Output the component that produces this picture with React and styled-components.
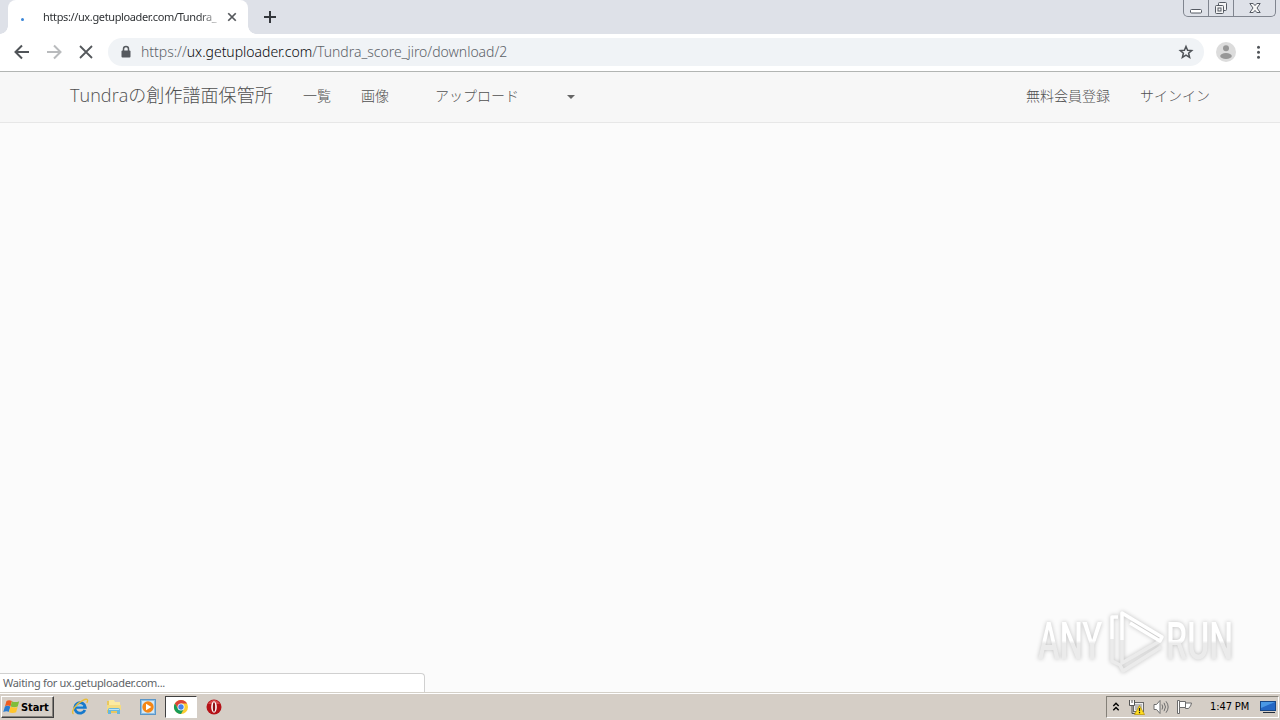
import React from "react";
import styled, { createGlobalStyle } from "styled-components";

const Global = createGlobalStyle`
  * { box-sizing: border-box; }
  html, body { margin: 0; padding: 0; overflow: hidden; }
  svg { display: block; flex: none; }
`;

const Screen = styled.div`
  position: relative;
  display: flex;
  flex-direction: column;
  width: 1280px;
  height: 720px;
  overflow: hidden;
  background: #fbfbfb;
  font-family: "Noto Sans", "Noto Sans CJK JP", sans-serif;
  white-space: nowrap;
`;

const TabStrip = styled.div`
  display: flex;
  align-items: flex-start;
  height: 34px;
  padding-left: 8px;
  background: #dee1e8;
`;

const Tab = styled.div`
  position: relative;
  display: flex;
  align-items: center;
  width: 240px;
  height: 34px;
  padding-left: 13px;
  border-radius: 8px 8px 0 0;
  background: #fff;
  &::before, &::after {
    content: "";
    position: absolute;
    bottom: 0;
    width: 8px;
    height: 8px;
  }
  &::before { left: -8px; background: radial-gradient(circle at 0 0, transparent 7.5px, #fff 8px); }
  &::after { right: -8px; background: radial-gradient(circle at 100% 0, transparent 7.5px, #fff 8px); }
`;

const LoadingDot = styled.span`
  width: 3px;
  height: 3px;
  margin-top: 5px;
  border-radius: 50%;
  background: #3a86d8;
`;

const TabTitle = styled.div`
  width: 176px;
  margin-left: 19px;
  font-size: 11px;
  line-height: 16px;
  letter-spacing: -0.37px;
  color: #303336;
  -webkit-mask-image: linear-gradient(90deg, #000 155px, rgba(0, 0, 0, 0.25) 176px);
  mask-image: linear-gradient(90deg, #000 155px, rgba(0, 0, 0, 0.25) 176px);
`;

const TabClose = styled.div`
  margin-left: 8px;
`;

const NewTab = styled.div`
  padding: 11px 0 0 16px;
`;

const WindowButtons = styled.div`
  display: flex;
  width: 93px;
  height: 17px;
  margin: 0 4px 0 auto;
  border: 1px solid #80858f;
  border-top: 0;
  border-radius: 0 0 5px 5px;
`;

const WindowButton = styled.div`
  display: flex;
  align-items: center;
  justify-content: center;
  width: ${(p) => p.$width}px;
  border-left: ${(p) => (p.$first ? "0" : "1px solid #80858f")};
`;

const Toolbar = styled.div`
  display: flex;
  align-items: center;
  height: 38px;
  padding: 0 14px 2px;
  border-bottom: 1px solid #b2b5b3;
  background: #fff;
`;

const NavIcons = styled.div`
  display: flex;
  align-items: center;
  gap: 16px;
  width: 94px;
`;

const AddressBar = styled.div`
  display: flex;
  align-items: center;
  width: 1096px;
  height: 28px;
  padding: 0 10px 0 12px;
  border-radius: 14px;
  background: #f0f3f6;
`;

const Url = styled.div`
  flex: 1;
  margin-left: 9px;
  font-size: 14px;
  font-weight: 300;
  line-height: 20px;
  letter-spacing: -0.02px;
  color: #5c6268;
`;

const Host = styled.span`
  color: #08090b;
`;

const ToolbarEnd = styled.div`
  display: flex;
  align-items: center;
  gap: 14px;
  margin-left: 12px;
`;

const SiteNav = styled.nav`
  display: flex;
  align-items: center;
  height: 51px;
  padding: 0 70px 3px;
  border-bottom: 1px solid #e7e7e7;
  background: #f7f7f7;
  font-family: "Open Sans", "Noto Sans CJK JP", sans-serif;
  font-weight: 300;
  color: #505050;
`;

const Brand = styled.div`
  width: 233px;
  padding-bottom: 2px;
  font-size: 18px;
  line-height: 26px;
  letter-spacing: 0.06px;
`;

const NavLink = styled.div`
  width: ${(p) => (p.$width ? `${p.$width}px` : "auto")};
  font-size: 14px;
  line-height: 20px;
`;

const Caret = styled.span`
  margin-top: 3px;
  border: 4px solid transparent;
  border-top-color: #666;
  border-bottom: 0;
`;

const NavRight = styled.div`
  display: flex;
  margin-left: auto;
`;

const Page = styled.main`
  flex: 1;
`;

const StatusBubble = styled.div`
  position: absolute;
  left: 0;
  bottom: 28px;
  width: 425px;
  height: 19px;
  padding-left: 3px;
  border: 1px solid #d0d0d0;
  border-left: 0;
  border-bottom: 0;
  border-radius: 0 4px 0 0;
  background: #fff;
  font-size: 11px;
  line-height: 18px;
  letter-spacing: -0.29px;
  color: #606367;
`;

const Watermark = styled.div`
  position: absolute;
  left: 1038px;
  top: 608px;
  display: flex;
  align-items: center;
  filter: drop-shadow(0 0 2px rgba(0, 0, 0, 0.24));
`;

const MarkText = styled.div`
  width: ${(p) => p.$width}px;
  height: 66px;
`;

const MarkLetters = styled.span`
  display: inline-block;
  font-family: "Roboto", sans-serif;
  font-size: 51px;
  font-weight: 500;
  line-height: 68px;
  background: linear-gradient(#fff 48%, #ebebeb 52%);
  -webkit-background-clip: text;
  background-clip: text;
  color: transparent;
  transform: scaleX(${(p) => p.$scale});
  transform-origin: 0 50%;
`;

const Taskbar = styled.div`
  display: flex;
  align-items: center;
  height: 28px;
  padding: 1px 1px 0 1px;
  border-top: 1px solid #d4d0c8;
  box-shadow: inset 0 1px #fff;
  background: #d5cec6;
  font-family: "DejaVu Sans Condensed", sans-serif;
`;

const StartButton = styled.div`
  display: flex;
  align-items: center;
  gap: 1px;
  width: 53px;
  height: 22px;
  padding-left: 1px;
  border: 1px solid;
  border-color: #fff #404040 #404040 #fff;
  box-shadow: inset -1px -1px #86827c;
  font-size: 11px;
  font-weight: 700;
  letter-spacing: -0.1px;
  color: #000;
`;

const QuickLaunch = styled.div`
  display: flex;
  align-items: center;
  margin-left: 9px;
`;

const TaskItem = styled.div`
  display: flex;
  align-items: center;
  justify-content: center;
  width: ${(p) => (p.$active ? 32 : 34)}px;
  height: 22px;
  border: 1px solid;
  border-color: ${(p) => (p.$active ? "#404040 #fff #fff #404040" : "transparent")};
  background: ${(p) => (p.$active ? "#fff" : "none")};
`;

const Tray = styled.div`
  display: flex;
  align-items: center;
  width: 173px;
  height: 22px;
  margin-left: auto;
  padding-left: 5px;
  border: 1px solid;
  border-color: #848078 #fff #fff #848078;
`;

const TrayIcons = styled.div`
  display: flex;
  align-items: center;
  gap: 8px;
  width: 98px;
`;

const Clock = styled.div`
  width: 50px;
  font-size: 11px;
  line-height: 16px;
  letter-spacing: -0.1px;
  color: #000;
`;

const BackIcon = ({ color, flip }) => (
  <svg width="16" height="16" viewBox="0 0 16 16" fill="none" stroke={color} strokeWidth="2">
    <path d={flip ? "M1 8h13M8 1.5 14.5 8 8 14.5" : "M15 8H2M8 1.5 1.5 8 8 14.5"} />
  </svg>
);

const CrossIcon = ({ size, color, width }) => (
  <svg width={size} height={size} viewBox="0 0 16 16" fill="none" stroke={color} strokeWidth={width}>
    <path d="M2 2l12 12M14 2 2 14" />
  </svg>
);

const LockIcon = () => (
  <svg width="12" height="14" viewBox="0 0 12 14">
    <path d="M3.5 6V4a2.5 2.5 0 0 1 5 0v2" fill="none" stroke="#55595e" strokeWidth="1.5" />
    <rect x="1.5" y="5.5" width="9" height="7" rx="1" fill="#55595e" />
  </svg>
);

const StarIcon = () => (
  <svg width="16" height="16" viewBox="0 0 16 16" fill="none" stroke="#4f5358" strokeWidth="1.5">
    <path d="M8 2.5 9.6 6.3l4.1.3-3.1 2.7 1 4L8 11.1l-3.6 2.2 1-4-3.1-2.7 4.1-.3z" />
  </svg>
);

const AvatarIcon = () => (
  <svg width="20" height="20" viewBox="0 0 20 20">
    <circle cx="10" cy="10" r="10" fill="#dcdcdc" />
    <circle cx="10" cy="6.3" r="3" fill="#979797" />
    <ellipse cx="10" cy="14" rx="5.8" ry="3" fill="#979797" />
  </svg>
);

const MenuIcon = () => (
  <svg width="16" height="16" viewBox="0 0 16 16" fill="#505458">
    <circle cx="8.5" cy="3.2" r="1.5" />
    <circle cx="8.5" cy="8.2" r="1.5" />
    <circle cx="8.5" cy="13.2" r="1.5" />
  </svg>
);

const WindowsLogo = () => (
  <svg width="17" height="16" viewBox="0 0 17 16">
    <path d="M3.5 2Q6 .5 8.9 2L7.5 7.3Q4.8 5.8 2 7.3z" fill="#ee5c20" />
    <path d="M8.9 2.2Q12.5 4 16.2 2.2l-1.5 5.4Q11.2 8.9 7.6 7.4z" fill="#7fbd3a" />
    <path d="M1.9 7.5Q4.5 6.2 7.3 7.5l-1.4 5.3Q3.2 11.6.3 13.1z" fill="#287bd0" />
    <path d="M7.5 7.8Q11 9.3 14.6 7.9l-1.5 5.3Q9.6 14.8 6 13.2z" fill="#ffc52c" />
  </svg>
);

const IeIcon = () => (
  <svg width="18" height="18" viewBox="0 0 18 18" fill="none">
    <path d="M13.9 12A5.3 5.3 0 1 1 14.3 9.3H5" stroke="#1679cc" strokeWidth="2.8" />
    <path d="M5 8.2h7" stroke="#78c8f2" strokeWidth="1" />
    <path d="M2.5 16C-.7 14 5.2 5.7 11.8 2.3 16.5 0 17.5 1.7 15.8 4.8" stroke="#e9bd36" strokeWidth="1.4" />
  </svg>
);

const FolderIcon = () => (
  <svg width="18" height="18" viewBox="0 0 18 18">
    <path d="M2 3h5l1 2h7v10H2z" fill="#e8c75f" />
    <path d="M4 2h5l1 2h5v5H4z" fill="#fbeaa0" />
    <path d="M2 7h14v5H2z" fill="#f4dc82" />
    <path d="M3 16v-4q0-2 2-2h8q2 0 2 2v4h-3v-3H6v3z" fill="#66b7de" />
    <path d="M4 11.5h10" stroke="#bde5f6" />
  </svg>
);

const MediaIcon = () => (
  <svg width="18" height="18" viewBox="0 0 18 18">
    <rect x="1.5" y="1.5" width="15" height="15" fill="#8fc0e5" stroke="#5a96c8" />
    <rect x="3" y="3" width="12" height="12" fill="#d5e9f6" />
    <circle cx="9" cy="9" r="5.7" fill="#f48616" />
    <path d="M7 5.7v6.6L12.4 9z" fill="#fff" />
  </svg>
);

const ChromeIcon = () => (
  <svg width="16" height="16" viewBox="0 0 16 16">
    <circle cx="8" cy="8" r="7" fill="#fccd32" />
    <path d="M1.9 4.5A7 7 0 0 1 14.1 4.5H8L5 9.7z" fill="#dc4437" />
    <path d="M1.9 4.5A7 7 0 0 0 8 15l3-5.2H5z" fill="#179b58" />
    <circle cx="8" cy="8" r="3.5" fill="#fff" />
    <circle cx="8" cy="8" r="2.7" fill="#4682ea" />
  </svg>
);

const OperaIcon = () => (
  <svg width="16" height="16" viewBox="0 0 16 16">
    <circle cx="8" cy="8" r="7.5" fill="#b51218" />
    <path d="M2 5Q8-3 14 5z" fill="#d8474a" />
    <ellipse cx="8" cy="8" rx="2.8" ry="5.8" fill="#fff" />
    <ellipse cx="8" cy="8" rx="1.2" ry="4.8" fill="#8e1015" />
  </svg>
);

const ChevronsIcon = () => (
  <svg width="8" height="10" viewBox="0 0 8 10" fill="none" stroke="#000" strokeWidth="1.4">
    <path d="M1.3 4 4 1.3 6.7 4M1.3 8.2 4 5.5l2.7 2.7" />
  </svg>
);

const NetworkIcon = () => (
  <svg width="17" height="16" viewBox="0 0 17 16">
    <rect x="5.5" y="3.5" width="10" height="9" fill="#eee" stroke="#686868" />
    <rect x="7" y="5" width="7" height="6" fill="#b9b9b9" />
    <path d="M1.5 1.5h5v5h-5z" fill="#fff" />
    <path d="M1.5 1v5.5h5V1M4 6.5v8h4M4 1v3" fill="none" stroke="#555" />
    <path d="M11.5 6.5 16.5 15.5h-10z" fill="#ffdd20" stroke="#b99100" strokeWidth=".7" />
    <path d="M11.5 9v3.2M11.5 13v1.2" stroke="#222" strokeWidth="1.2" />
  </svg>
);

const SpeakerIcon = () => (
  <svg width="16" height="16" viewBox="0 0 16 16" stroke="#6e6e6e">
    <path d="M1 5.5h2.5L7 1.5v13l-3.5-4H1z" fill="#fff" />
    <path d="M9 5.5q1.5 2.5 0 5M11 3.8q3 4.2 0 8.4M13 2.3q4.3 5.7 0 11.4" fill="none" />
  </svg>
);

const FlagIcon = () => (
  <svg width="16" height="16" viewBox="0 0 16 16" stroke="#6b6b6b">
    <path d="M.5 1.5h2v13h-2z" fill="#fff" />
    <path d="M2.5 2.5h6v1.5h6q-.3 3-3 5.5h-3V8.5h-6z" fill="#fff" />
    <path d="M8.5 4v4.5" fill="none" />
  </svg>
);

const DesktopIcon = () => (
  <svg width="16" height="14" viewBox="0 0 16 14">
    <rect x="0.5" y="1.5" width="15" height="9" fill="#2467c4" stroke="#184786" />
    <path d="M1 2h14L1 8z" fill="#4a98e5" />
    <path d="M3 12.5h12" stroke="#222c3c" />
  </svg>
);

const PlayMark = () => (
  <svg width="58" height="66" viewBox="0 0 58 66" fill="none" strokeWidth="3.5" strokeLinejoin="round">
    <path d="M52 33 14 55V32" stroke="#ebebeb" />
    <path d="M4 31v22l8 4 3 6L53 39" stroke="#ebebeb" />
    <path d="M14 32V5l40 24-2 4L22 15" stroke="#fff" />
    <path d="M10 9H4v22" stroke="#fff" />
  </svg>
);

export default function App() {
  return (
    <>
      <Global />
      <Screen>
        <TabStrip>
          <Tab>
            <LoadingDot />
            <TabTitle>https://ux.getuploader.com/Tundra_</TabTitle>
            <TabClose><CrossIcon size={10} color="#55585c" width={2.8} /></TabClose>
          </Tab>
          <NewTab>
            <svg width="12" height="12" viewBox="0 0 12 12" stroke="#34373c" strokeWidth="2">
              <path d="M6 0v12M0 6h12" />
            </svg>
          </NewTab>
          <WindowButtons>
            <WindowButton $width={24} $first>
              <svg width="14" height="14" viewBox="0 0 14 14">
                <rect x="1.5" y="8.5" width="11" height="3.5" rx="1" fill="#fff" stroke="#555a63" />
              </svg>
            </WindowButton>
            <WindowButton $width={26}>
              <svg width="14" height="14" viewBox="0 0 14 14" fill="#f4f4f5" stroke="#555a63">
                <rect x="4.5" y="1.5" width="8" height="8" rx="1" />
                <rect x="1.5" y="4.5" width="8" height="8" rx="1" />
                <rect x="4" y="7" width="3" height="3" />
              </svg>
            </WindowButton>
            <WindowButton $width={42}>
              <svg width="12" height="12" viewBox="0 0 12 12">
                <path d="M.8 1.5h3.4L6 3.6l1.8-2.1h3.4L8 6l3.2 4.5H7.8L6 8.4l-1.8 2.1H.8L4 6z" fill="#f8f8f8" stroke="#555a63" />
              </svg>
            </WindowButton>
          </WindowButtons>
        </TabStrip>
        <Toolbar>
          <NavIcons>
            <BackIcon color="#505458" />
            <BackIcon color="#b9bbbd" flip />
            <CrossIcon size={16} color="#55585c" width={1.8} />
          </NavIcons>
          <AddressBar>
            <LockIcon />
            <Url>https://<Host>ux.getuploader.com</Host>/Tundra_score_jiro/download/2</Url>
            <StarIcon />
          </AddressBar>
          <ToolbarEnd>
            <AvatarIcon />
            <MenuIcon />
          </ToolbarEnd>
        </Toolbar>
        <SiteNav>
          <Brand>Tundraの創作譜面保管所</Brand>
          <NavLink $width={58}>一覧</NavLink>
          <NavLink $width={74}>画像</NavLink>
          <NavLink $width={132}>アップロード</NavLink>
          <Caret />
          <NavRight>
            <NavLink $width={114}>無料会員登録</NavLink>
            <NavLink>サインイン</NavLink>
          </NavRight>
        </SiteNav>
        <Page />
        <Taskbar>
          <StartButton><WindowsLogo />Start</StartButton>
          <QuickLaunch>
            <TaskItem><IeIcon /></TaskItem>
            <TaskItem><FolderIcon /></TaskItem>
            <TaskItem><MediaIcon /></TaskItem>
            <TaskItem $active><ChromeIcon /></TaskItem>
            <TaskItem><OperaIcon /></TaskItem>
          </QuickLaunch>
          <Tray>
            <TrayIcons>
              <ChevronsIcon />
              <NetworkIcon />
              <SpeakerIcon />
              <FlagIcon />
            </TrayIcons>
            <Clock>1:47 PM</Clock>
            <DesktopIcon />
          </Tray>
        </Taskbar>
        <StatusBubble>Waiting for ux.getuploader.com...</StatusBubble>
        <Watermark>
          <MarkText $width={70}><MarkLetters $scale={0.64}>ANY</MarkLetters></MarkText>
          <PlayMark />
          <MarkText $width={70}><MarkLetters $scale={0.66}>RUN</MarkLetters></MarkText>
        </Watermark>
      </Screen>
    </>
  );
}
